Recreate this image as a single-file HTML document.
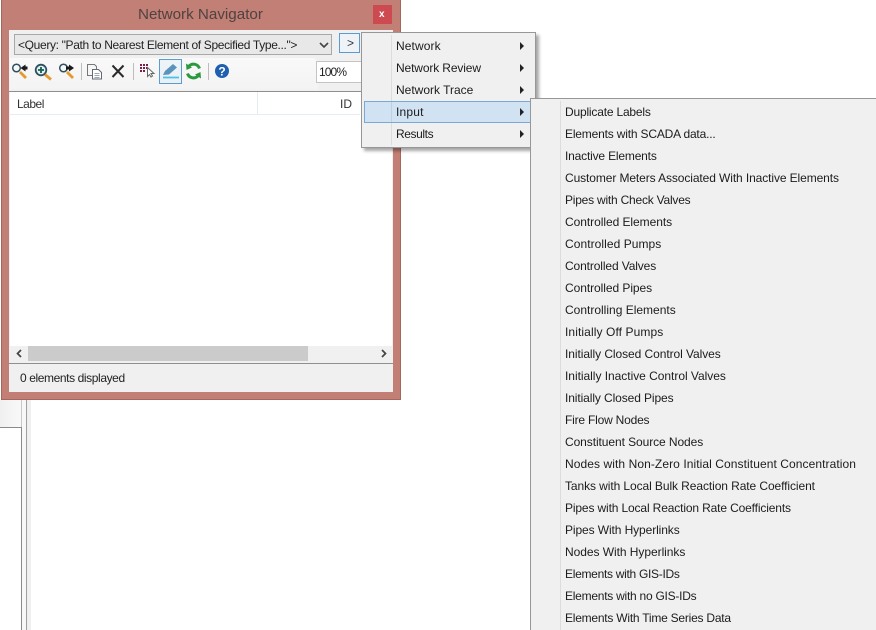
<!DOCTYPE html>
<html><head><meta charset="utf-8"><style>
html,body{margin:0;padding:0;background:#fff;width:876px;height:630px;overflow:hidden}
#r{left:0;top:0;width:876px;height:630px;overflow:hidden;font-family:"Liberation Sans",sans-serif;font-size:12px;color:#222}
div,span,svg{position:absolute;box-sizing:border-box}
.t{white-space:nowrap;line-height:16px}
.m{white-space:nowrap;line-height:16px;left:565px;color:#1c1c1c}
.a{width:0;height:0;border-left:4px solid #222;border-top:4px solid transparent;border-bottom:4px solid transparent}
</style></head><body><div id="r">
<!-- background app panel -->
<div style="left:0;top:400px;width:22px;height:27px;background:linear-gradient(90deg,#f0f0f0,#f9f9f9)"></div>
<div style="left:0;top:427px;width:22px;height:1px;background:#8a8a8a"></div>
<div style="left:21px;top:400px;width:1px;height:27px;background:#c8c8c8"></div>
<div style="left:21px;top:427px;width:1px;height:203px;background:#8a8a8a"></div>
<div style="left:22px;top:400px;width:5px;height:230px;background:#f8f8f8"></div>
<div style="left:27px;top:400px;width:4px;height:230px;background:#f0f0f0"></div>
<div style="left:26px;top:400px;width:1px;height:230px;background:#a0a0a0"></div>
<!-- window -->
<div style="left:1px;top:-1px;width:400px;height:401px;background:#c17f75;border:1px solid #a5665e"></div>
<div class="t" style="left:138px;top:6px;font-size:15.2px;line-height:18px;color:#4f4240">Network Navigator</div>
<div style="left:373px;top:5px;width:19px;height:19px;background:#cc4a50"></div>
<div class="t" style="left:379px;top:7px;color:#fff;font-size:10px;font-weight:bold">x</div>
<div style="left:9px;top:30px;width:384px;height:362px;background:#f0f0f0"></div>
<!-- combo -->
<div style="left:14px;top:34px;width:318px;height:21px;background:#e8e8e8;border:1px solid #a8a8a8"></div>
<div class="t" style="left:18px;top:37px;letter-spacing:-.34px">&lt;Query: "Path to Nearest Element of Specified Type..."&gt;</div>
<svg style="left:319px;top:42px" width="10" height="7" viewBox="0 0 10 7"><path d="M1 1l4 4 4-4" fill="none" stroke="#444" stroke-width="1.6"/></svg>
<div style="left:339px;top:33px;width:21px;height:20px;background:#eef3f8;border:1px solid #5b9bd0"></div>
<div class="t" style="left:347px;top:35px;color:#333">&gt;</div>
<!-- toolbar -->
<div style="left:10px;top:58px;width:308px;height:32px;background:linear-gradient(#f9f9f9,#f3f3f3);border-radius:0 6px 0 0"></div>
<div style="left:159px;top:59px;width:23px;height:25px;border:1px solid #5b9bd0;background:rgba(205,230,247,.25)"></div>
<svg style="left:0;top:0" width="260" height="90" viewBox="0 0 260 90">
 <g fill="none">
  <circle cx="16.500" cy="68" r="3.800" stroke="#2f4f5f" stroke-width="1.500"/><path d="M20 72l6 6" stroke="#e59a2f" stroke-width="2.800"/><path d="M20.500 68l5-3.500v2h2v3h-2v2z" fill="#1a1a1a"/>
  <circle cx="41" cy="70" r="5.300" stroke="#2f4f5f" stroke-width="1.800" fill="#dff2f0"/><path d="M38 70h6M41 67v6" stroke="#146050" stroke-width="1.800"/><path d="M45 74.500l6 5" stroke="#e59a2f" stroke-width="2.800"/>
  <circle cx="63.500" cy="68" r="3.800" stroke="#2f4f5f" stroke-width="1.500"/><path d="M67 72l6 6" stroke="#e59a2f" stroke-width="2.800"/><path d="M74 68l-5-3.500v2h-3v3h3v2z" fill="#1a1a1a"/>
  <path d="M81.500 63v17" stroke="#bdbdbd"/>
  <path d="M87.500 64.500h7l2 2v9h-9z" fill="#f6f6f6" stroke="#777"/><path d="M92.500 69.500h6l3 3v6.500h-9z" fill="#fff" stroke="#667"/><path d="M94.500 73.500h5M94.500 75.500h5M94.500 77.500h5" stroke="#7a8a9a" stroke-width=".8"/>
  <path d="M112.500 65.500l11 11.500M123.500 65.500l-11 11.500" stroke="#2a2a2a" stroke-width="2"/>
  <path d="M133.500 63v17" stroke="#bdbdbd"/>
  <path d="M140 64h2v2h-2zM143 64h2v2h-2zM146 64h2v2h-2zM140 67h2v2h-2zM143 67h2v2h-2zM146 67h1.500v2h-1.500zM140 70h2v2h-2zM143 70h2v2h-2z" fill="#7a1f45"/>
  <path d="M147.500 67.500v9l2-2 1.500 2.500 1.500-1-1.500-2.500h3z" fill="#fff" stroke="#666"/>
  <path d="M163 75l2-4 8-7 4 3.500-8 7z" fill="#5c93bd"/><path d="M163 77.500h16" stroke="#4fc0e8" stroke-width="1.800"/>
  <path d="M199.500 68.500a6.300 6.300 0 0 0-10.500-2.500" stroke="#2b9a3f" stroke-width="3"/><path d="M186 63.500l.5 6.500 5.500-2.500z" fill="#2b9a3f"/>
  <path d="M187.500 73.500a6.300 6.300 0 0 0 10.500 2.500" stroke="#2b9a3f" stroke-width="3"/><path d="M201 78.500l-.5-6.500-5.500 2.500z" fill="#2b9a3f"/>
  <path d="M208.500 63v17" stroke="#bdbdbd"/>
  <circle cx="222" cy="71" r="7" fill="#1f5fb0"/>
 </g>
 <text x="222" y="75.500" text-anchor="middle" font-family="Liberation Sans" font-weight="bold" font-size="12" fill="#fff">?</text>
</svg>
<div style="left:316px;top:61px;width:48px;height:22px;background:#fff;border:1px solid #c4c4c4"></div>
<div class="t" style="left:319px;top:64px;color:#222;letter-spacing:-.9px">100%</div>
<!-- grid -->
<div style="left:9px;top:91px;width:384px;height:1px;background:#8f8f8f"></div>
<div style="left:10px;top:92px;width:382px;height:256px;background:#fff"></div>
<div style="left:10px;top:114px;width:350px;height:1px;background:#e8edf3"></div>
<div style="left:257px;top:92px;width:1px;height:22px;background:#e6ebf0"></div>
<div class="t" style="left:17px;top:96px;color:#333;letter-spacing:-.5px">Label</div>
<div class="t" style="left:340px;top:96px;color:#333">ID</div>
<!-- hscroll -->
<div style="left:10px;top:346px;width:382px;height:17px;background:#f0f0f0"></div>
<div style="left:28px;top:346px;width:280px;height:15px;background:#cbcbcb"></div>
<svg style="left:15px;top:349px" width="9" height="9" viewBox="0 0 9 9"><path d="M6 1L2.500 4.500 6 8" fill="none" stroke="#444" stroke-width="1.700"/></svg>
<svg style="left:379px;top:349px" width="9" height="9" viewBox="0 0 9 9"><path d="M3 1l3.500 3.500L3 8" fill="none" stroke="#444" stroke-width="1.700"/></svg>
<div style="left:9px;top:363px;width:384px;height:1px;background:#8f8f8f"></div>
<div class="t" style="left:20px;top:370px;color:#222;letter-spacing:-.4px">0 elements displayed</div>
<!-- menu 1 -->
<div style="left:361px;top:32px;width:175px;height:116px;background:#f0f0f0;border:1px solid #979797;box-shadow:3px 3px 3px rgba(0,0,0,.35)"></div>
<div style="left:391px;top:35px;width:1px;height:110px;background:#dcdcdc"></div>
<div style="left:364px;top:101px;width:167px;height:22px;background:#d1e2f2;border:1px solid #7aa9d8"></div>
<div style="left:391px;top:102px;width:1px;height:20px;background:#bcd0e2"></div>
<div class="t" style="left:396px;top:38px;color:#1c1c1c;letter-spacing:.1px">Network</div>
<div class="t" style="left:396px;top:60px;color:#1c1c1c;letter-spacing:-.13px">Network Review</div>
<div class="t" style="left:396px;top:82px;color:#1c1c1c">Network Trace</div>
<div class="t" style="left:396px;top:104px;color:#1c1c1c;letter-spacing:.2px">Input</div>
<div class="t" style="left:396px;top:126px;color:#1c1c1c;letter-spacing:-.4px">Results</div>
<div class="a" style="left:520px;top:42px"></div>
<div class="a" style="left:520px;top:64px"></div>
<div class="a" style="left:520px;top:86px"></div>
<div class="a" style="left:520px;top:108px"></div>
<div class="a" style="left:520px;top:130px"></div>
<!-- submenu -->
<div style="left:530px;top:98px;width:346px;height:532px;background:#f0f0f0;border-left:1px solid #979797;border-top:1px solid #979797"></div>
<div style="left:560px;top:101px;width:1px;height:529px;background:#dcdcdc"></div>
<div class="m" style="top:104px;letter-spacing:-.19px">Duplicate Labels</div>
<div class="m" style="top:126px;letter-spacing:-.18px">Elements with SCADA data...</div>
<div class="m" style="top:148px;letter-spacing:-.18px">Inactive Elements</div>
<div class="m" style="top:170px;letter-spacing:-.1px">Customer Meters Associated With Inactive Elements</div>
<div class="m" style="top:192px;letter-spacing:-.22px">Pipes with Check Valves</div>
<div class="m" style="top:214px;letter-spacing:-.05px">Controlled Elements</div>
<div class="m" style="top:236px;letter-spacing:.06px">Controlled Pumps</div>
<div class="m" style="top:258px;letter-spacing:-.12px">Controlled Valves</div>
<div class="m" style="top:280px;letter-spacing:-.06px">Controlled Pipes</div>
<div class="m" style="top:302px">Controlling Elements</div>
<div class="m" style="top:324px;letter-spacing:.1px">Initially Off Pumps</div>
<div class="m" style="top:346px;letter-spacing:-.07px">Initially Closed Control Valves</div>
<div class="m" style="top:368px;letter-spacing:-.03px">Initially Inactive Control Valves</div>
<div class="m" style="top:390px;letter-spacing:-.1px">Initially Closed Pipes</div>
<div class="m" style="top:412px;letter-spacing:-.2px">Fire Flow Nodes</div>
<div class="m" style="top:434px;letter-spacing:-.08px">Constituent Source Nodes</div>
<div class="m" style="top:456px;letter-spacing:.08px">Nodes with Non-Zero Initial Constituent Concentration</div>
<div class="m" style="top:478px;letter-spacing:-.085px">Tanks with Local Bulk Reaction Rate Coefficient</div>
<div class="m" style="top:500px;letter-spacing:-.14px">Pipes with Local Reaction Rate Coefficients</div>
<div class="m" style="top:522px;letter-spacing:-.1px">Pipes With Hyperlinks</div>
<div class="m" style="top:544px;letter-spacing:-.05px">Nodes With Hyperlinks</div>
<div class="m" style="top:566px;letter-spacing:-.29px">Elements with GIS-IDs</div>
<div class="m" style="top:588px;letter-spacing:-.25px">Elements with no GIS-IDs</div>
<div class="m" style="top:610px;letter-spacing:-.23px">Elements With Time Series Data</div>
</div></body></html>
